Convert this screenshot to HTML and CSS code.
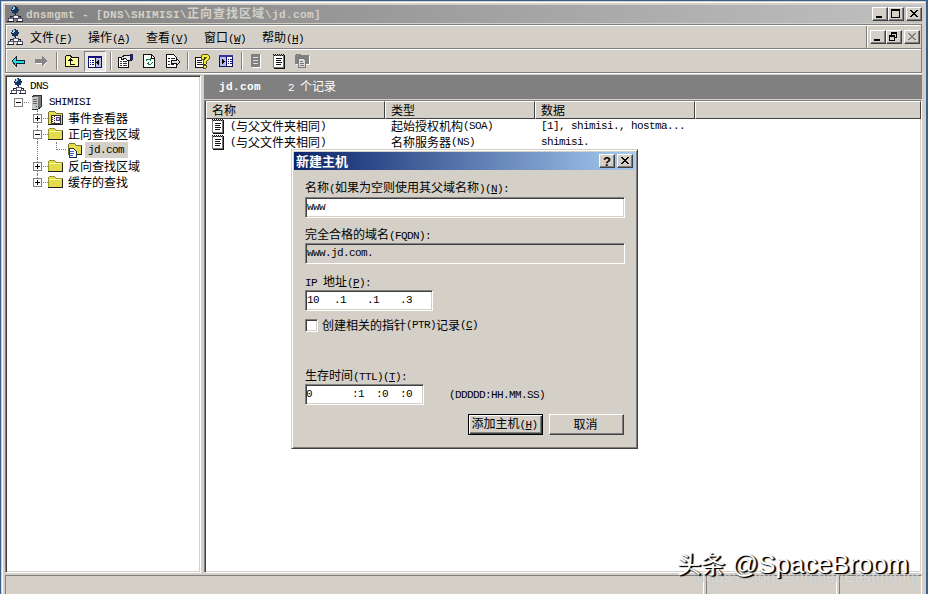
FILE: index.html
```html
<!DOCTYPE html>
<html lang="zh-CN">
<head>
    <meta charset="UTF-8">
    <title>dnsmgmt</title>
    <link rel="stylesheet" href="styles.css">
</head>
<body>
    <!-- shared icons -->
    <svg class="defs" width="0" height="0">
        <symbol id="dns" viewBox="0 0 16 16">
            <path d="M8 6v5M3 13v-3h10v3" fill="none" stroke="#223"/>
            <circle cx="8" cy="4" r="3.6" fill="#17365f"/>
            <path d="M6 1h2v2H6zM5 3h2v1H5z" fill="#9fd0ee"/>
            <path d="M6 9h5v3H6zM1 12h5v3H1zM10 12h5v3h-5z" fill="#fff" stroke="#335" stroke-width=".8"/>
            <path d="M0 15.5h7M9 15.5h7" stroke="#223"/>
        </symbol>
        <symbol id="server" viewBox="0 0 16 16">
            <path d="M3 3l3-2h6v12l-3 2H3z" fill="#777" stroke="#333"/>
            <path d="M3 3h6v12H3z" fill="#c6c6c6"/>
            <path d="M4 5.5h4M4 7.5h4M4 9.5h4" stroke="#666"/>
            <path d="M7 12h1v1H7z" fill="#080"/>
        </symbol>
        <symbol id="folder" viewBox="0 0 16 16">
            <path d="M1 13V4l2-2h4l2 2h6v9z" fill="#e3dc4c" stroke="#99962b"/>
            <path d="M2 5h12" stroke="#fffba8"/>
            <path d="M1 13.5h14.5V5" fill="none" stroke="#222"/>
        </symbol>
        <symbol id="events" viewBox="0 0 16 16">
            <path d="M1 14V3l2-2h4l2 2h6v11z" fill="#e3dc4c" stroke="#77742b"/>
            <path d="M4 5h9v8H4z" fill="#fff" stroke="#334"/>
            <path d="M5 5v8M7 6v7" stroke="#222" stroke-dasharray="1 1"/>
            <path d="M9 7h3v3H9z" fill="#d9c4ef" stroke="#647"/>
            <path d="M1 14.5h14.5V4" fill="none" stroke="#222"/>
        </symbol>
        <symbol id="zone" viewBox="0 0 16 16">
            <path d="M2 12V3l2-2h4l2 2h5v9z" fill="#e3dc4c" stroke="#77742b"/>
            <path d="M15.5 4v8.5H9" fill="none" stroke="#222"/>
            <path d="M3 6h4l3 3v6H3z" fill="#fff" stroke="#235"/>
            <path d="M4 9.5h4M4 11.5h4M4 13.5h3" stroke="#36c"/>
        </symbol>
        <symbol id="record" viewBox="0 0 16 16">
            <path d="M2.5 2.5h10v12h-10z" fill="#fff" stroke="#777"/>
            <path d="M2 1.5h11" stroke="#111" stroke-dasharray="1 1"/>
            <path d="M3 2.5h11" stroke="#111" stroke-dasharray="1 1"/>
            <path d="M3 15.5h10.5V3" fill="none" stroke="#111"/>
            <path d="M5 5.5h6M5 7.5h5M5 9.5h6M5 11.5h5" stroke="#111"/>
        </symbol>
        <symbol id="min" viewBox="0 0 12 10"><path d="M2 7h6v2H2z"/></symbol>
        <symbol id="max" viewBox="0 0 12 10"><path d="M1 0h9v9H1zM2 2v6h7V2z" fill-rule="evenodd"/></symbol>
        <symbol id="restore" viewBox="0 0 12 10"><path d="M3 0h6v6H7v3H1V3h2zM4 2v1h3v2h1V2zM2 5v3h4V5z" fill-rule="evenodd"/></symbol>
        <symbol id="close" viewBox="0 0 12 10"><path d="M2 1h2v1h1v1h2V2h1V1h2v1H9v1H8v1H7v1h1v1h1v1h1v1H8V7H7V6H5v1H4v1H2V7h1V6h1V5h1V4H4V3H3V2H2z"/></symbol>
    </svg>

    <div class="window">
        <div class="titlebar">
            <svg class="icon"><use href="#dns"/></svg>
            <div class="title"><span class="en">dnsmgmt - [DNS\SHIMISI\</span>正向查找区域<span class="en">\jd.com]</span></div>
            <div class="buttons">
                <button><svg><use href="#min"/></svg></button>
                <button><svg><use href="#max"/></svg></button>
                <button class="x"><svg><use href="#close"/></svg></button>
            </div>
        </div>

        <div class="bars">
            <div class="menubar">
                <svg class="icon"><use href="#dns"/></svg>
                <ul class="menu">
                    <li>文件<span class="en">(<u>F</u>)</span></li>
                    <li>操作<span class="en">(<u>A</u>)</span></li>
                    <li>查看<span class="en">(<u>V</u>)</span></li>
                    <li>窗口<span class="en">(<u>W</u>)</span></li>
                    <li>帮助<span class="en">(<u>H</u>)</span></li>
                </ul>
                <div class="buttons child">
                    <button><svg><use href="#min"/></svg></button>
                    <button><svg><use href="#restore"/></svg></button>
                    <button class="x off"><svg><use href="#close"/></svg></button>
                </div>
            </div>
            <div class="toolbar">
                <svg class="tool" viewBox="0 0 16 16"><path d="M2 8l4-4v3h8v3H6v3z" fill="#2dd" stroke="#123"/></svg>
                <svg class="tool t2" viewBox="0 0 16 16"><path d="M2 6h7V3l5 5-5 5v-3H2z" fill="#858585"/><path d="M14 9l-4 4M3 10.500h6" stroke="#fff"/></svg>
                <span class="sep s1"></span>
                <svg class="tool t3" viewBox="0 0 16 16"><path d="M1.500 13.500v-10l1-1h4l1 2h7v9z" fill="#ffff99" stroke="#111"/><path d="M6.500 6v5h4M4.500 8l2-2 2 2" fill="none" stroke="#111"/></svg>
                <span class="pressed">
                    <svg class="tool" viewBox="0 0 16 16"><path d="M1.500 2.500h13v11h-13z" fill="#fff" stroke="#111166"/><path d="M1 2h14v2H1z" fill="#11117a"/><path d="M8 4h6v9H8z" fill="#b9bce8"/><path d="M8.500 4v9" stroke="#117"/><path d="M3 6h1v1H3zM5 6h2v1H5zM3 8h1v1H3zM5 8h2v1H5zM3 10h1v1H3zM5 10h2v1H5z" fill="#117"/><path d="M12 6v5l-3-2.500z"/></svg>
                </span>
                <span class="sep s2"></span>
                <svg class="tool t4" viewBox="0 0 17 16"><path d="M1.500 4.500h10v10h-10z" fill="#fff" stroke="#111"/><path d="M3 8.500h2M6 8.500h4M3 10.500h2M6 10.500h4M3 12.500h2M6 12.500h4" stroke="#333"/><path d="M4 5l4-3h6v5h-4L8 5 5 7z" fill="#e9e6df" stroke="#111"/><path d="M13 1h3v6h-3z" fill="#226"/></svg>
                <svg class="tool t5" viewBox="0 0 16 16"><path d="M2.500 1.500h8l3 3v10h-11z" fill="#fff" stroke="#111"/><path d="M10 2v3h3" fill="none" stroke="#111"/><path d="M5 8V7l1-1h3l1 1M9 5v3M11 9v1l-1 1H7l-1-1M7 9v3" fill="none" stroke="#178248"/></svg>
                <svg class="tool t6" viewBox="0 0 16 16"><path d="M1.500 1.500h7l3 3v10h-10z" fill="#fff" stroke="#111"/><path d="M3 5.500h2M3 8.500h2M3 11.500h2M6 5.500h4M6 11.500h3" stroke="#222"/><path d="M6 7.500h5V5l4 4-4 4v-2.500H6z" fill="#ddd" stroke="#111"/></svg>
                <span class="sep s3"></span>
                <svg class="tool t7" viewBox="0 0 16 16"><path d="M1.500 4.500h9v10h-9z" fill="#fff" stroke="#111"/><path d="M3 7.500h5M3 9.500h5M3 11.500h6" stroke="#222"/><path d="M7 6V3l2-2h4l2 2v3l-3 3v2H9V8l3-3V4h-2v2zM9 12h3v3H9z" fill="#f5ec38" stroke="#332f00" stroke-width=".8"/></svg>
                <svg class="tool t8" viewBox="0 0 16 16"><path d="M1.500 2.500h13v11h-13z" fill="#fff" stroke="#111166"/><path d="M1 2h14v2H1z" fill="#33339a"/><path d="M2 4h6v9H2z" fill="#b9bce8"/><path d="M8.500 4v9" stroke="#117"/><path d="M10 6h1v1h-1zM12 6h2v1h-2zM10 8h1v1h-1zM12 8h2v1h-2zM10 10h1v1h-1zM12 10h2v1h-2z" fill="#117"/><path d="M4 6v5l3-2.500z"/></svg>
                <span class="sep s4"></span>
                <svg class="tool t9" viewBox="0 0 16 16"><path d="M4 2h9v13H4z" fill="#fff"/><path d="M3 1h9v13H3z" fill="#808080"/><path d="M5 4.500h5M5 7.500h5M5 10.500h5" stroke="#ddd"/></svg>
                <svg class="tool t10"><use href="#record"/></svg>
                <svg class="tool t11" viewBox="0 0 16 16"><path d="M2 12V3l1-1h4l1 1h8v9z" fill="#fff"/><path d="M1 11V2l1-1h4l1 1h8v9z" fill="#808080"/><path d="M4.500 5.500h5l2 2v7h-7z" fill="#ddd" stroke="#777"/><path d="M6 8.500h3M6 10.500h4M6 12.500h4" stroke="#777"/></svg>
            </div>
        </div>

        <div class="main">
            <ul class="tree">
                <li><svg class="icon"><use href="#dns"/></svg><span class="en">DNS</span></li>
                <li class="l1"><i class="box"></i><svg class="icon"><use href="#server"/></svg><span class="en">SHIMISI</span></li>
                <li class="l2"><i class="box plus"></i><svg class="icon"><use href="#events"/></svg>事件查看器</li>
                <li class="l2"><i class="box"></i><svg class="icon"><use href="#folder"/></svg>正向查找区域</li>
                <li class="l3"><i class="elbow"></i><svg class="icon"><use href="#zone"/></svg><span class="en selected">jd.com</span></li>
                <li class="l2"><i class="box plus"></i><svg class="icon"><use href="#folder"/></svg>反向查找区域</li>
                <li class="l2"><i class="box plus"></i><svg class="icon"><use href="#folder"/></svg>缓存的查找</li>
            </ul>

            <div class="detail">
                <div class="banner"><b class="en">jd.com</b><span><span class="en">2 </span>个记录</span></div>
                <div class="list">
                    <div class="row head"><div>名称</div><div>类型</div><div>数据</div><div></div></div>
                    <div class="row">
                        <div><svg class="icon"><use href="#record"/></svg><span class="en">(</span>与父文件夹相同<span class="en">)</span></div>
                        <div>起始授权机构<span class="en">(SOA)</span></div>
                        <div class="en">[1], shimisi., hostma...</div>
                    </div>
                    <div class="row">
                        <div><svg class="icon"><use href="#record"/></svg><span class="en">(</span>与父文件夹相同<span class="en">)</span></div>
                        <div>名称服务器<span class="en">(NS)</span></div>
                        <div class="en">shimisi.</div>
                    </div>
                </div>
            </div>
        </div>

        <div class="status"><div></div><div></div><div></div></div>
    </div>

    <div class="dialog">
        <div class="dialog-title">
            <div class="title">新建主机</div>
            <div class="buttons">
                <button class="help">?</button>
                <button class="x"><svg><use href="#close"/></svg></button>
            </div>
        </div>
        <form class="form">
            <div class="label">名称<span class="en">(</span>如果为空则使用其父域名称<span class="en">)(<u>N</u>):</span></div>
            <div class="field en">www</div>
            <div class="label fqdn">完全合格的域名<span class="en">(FQDN):</span></div>
            <div class="field readonly en">www.jd.com.</div>
            <div class="label ip-label"><span class="en">IP </span>地址<span class="en">(<u>P</u>):</span></div>
            <div class="field ip en"><span>10</span><span>.1</span><span>.1</span><span>.3</span></div>
            <div class="check"><i class="checkbox"></i>创建相关的指针<span class="en">(PTR)</span>记录<span class="en">(<u>C</u>)</span></div>
            <div class="label ttl-label">生存时间<span class="en">(TTL)(<u>T</u>):</span></div>
            <div class="ttl-row">
                <div class="field ttl en"><span>0</span><span>:1</span><span>:0</span><span>:0</span></div>
                <span class="en">(DDDDD:HH.MM.SS)</span>
            </div>
            <div class="actions">
                <button type="button" class="btn default">添加主机<span class="en">(<u>H</u>)</span></button>
                <button type="button" class="btn">取消</button>
            </div>
        </form>
    </div>

    <div class="watermark">头条 <span>@SpaceBroom</span></div>
    <div class="link">https://blog.csdn.net/Eastmount</div>
</body>
</html>
```
FILE: styles.css
```css
* {
    box-sizing: border-box;
}

body {
    margin: 0;
    width: 928px;
    height: 594px;
    overflow: hidden;
    position: relative;
    background: #3a5f8c;
    font: 12px/16px "Noto Sans CJK SC", sans-serif;
    color: #000;
}

ul {
    list-style: none;
    margin: 0;
    padding: 0;
}

svg {
    display: block;
    flex: none;
    shape-rendering: crispEdges;
}

.defs {
    position: absolute;
}

/* half-width latin text, 6px per letter */
.en {
    font-family: "Liberation Mono", monospace;
    font-size: 11px;
    letter-spacing: -0.6px;
    white-space: pre;
}

u {
    text-underline-offset: 1px;
}

.icon {
    width: 16px;
    height: 16px;
}

.window {
    margin: 1px 2px 0 1px;
    height: 600px;
    padding: 3px 3px 0 3px;
    border: 1px solid #d4d0c8;
    box-shadow: inset 1px 1px #fff;
    background: #d4d0c8;
    display: flex;
    flex-direction: column;
}

.titlebar {
    height: 18px;
    display: flex;
    align-items: center;
    padding: 0 0 0 2px;
    background: linear-gradient(to right, #808080, #c0c0c0);
    color: #d4d0c8;
    font-weight: bold;
}

.titlebar .title {
    margin-left: 3px;
    flex: 1;
    letter-spacing: 1px;
}

/* bold letters are one pixel wider */
.titlebar .en,
.banner b.en {
    letter-spacing: 0.4px;
}

.buttons {
    display: flex;
}

.buttons button {
    width: 16px;
    height: 14px;
    padding: 1px;
    border: 1px solid;
    border-color: #fff #404040 #404040 #fff;
    box-shadow: inset -1px -1px #808080;
    background: #d4d0c8;
    font: bold 13px/11px "Liberation Sans", sans-serif;
}

.buttons svg {
    width: 12px;
    height: 10px;
}

.buttons .x {
    margin-left: 2px;
}

.buttons .off {
    fill: #808080;
}

.bars {
    margin-top: 1px;
    height: 49px;
    border: 1px solid #808080;
    box-shadow: inset 1px 1px #fff, 0 1px #fff;
}

.menubar {
    height: 24px;
    display: flex;
    padding: 1px 1px 0 1px;
    border-bottom: 1px solid #808080;
}

.menubar > .icon {
    margin: 3px 0 0 0;
}

.menu {
    display: flex;
    gap: 16px;
    padding: 3px 0 0 7px;
    flex: 1;
}

.menu li {
    width: 42px;
    white-space: nowrap;
}

.child {
    padding: 4px 0 0 3px;
    border-left: 1px solid #808080;
    box-shadow: inset 1px 0 #fff;
}

.toolbar {
    height: 23px;
    display: flex;
    align-items: center;
    padding-left: 4px;
    border-top: 1px solid #fff;
}

.tool {
    width: 16px;
    height: 16px;
}

.t2 { margin-left: 7px; }
.t3 { margin: 0 4px 0 6px; }
.t4 { margin-left: 5px; width: 17px; }
.t5 { margin-left: 7px; }
.t6 { margin-left: 8px; }
.t7 { margin-left: 5px; }
.t8 { margin-left: 8px; }
.t9 { margin-left: 5px; }
.t10 { margin-left: 7px; }
.t11 { margin-left: 7px; }

.sep {
    width: 2px;
    height: 18px;
    border-left: 1px solid #808080;
    border-right: 1px solid #fff;
}

.s1 { margin-left: 7px; }
.s2 { margin-left: 4px; }
.s3 { margin-left: 6px; }
.s4 { margin-left: 7px; }

.pressed {
    width: 22px;
    height: 21px;
    padding: 2px;
    border: 1px solid;
    border-color: #808080 #fff #fff #808080;
    background: #eae8e4;
}

.main {
    margin-top: 2px;
    height: 498px;
    display: flex;
    gap: 3px;
}

.tree {
    width: 196px;
    border: 1px solid;
    border-color: #808080 #fff #fff #808080;
    box-shadow: inset 1px 1px #404040, inset -1px -1px #d4d0c8;
    background: #fff;
    padding: 2px 0 0 4px;
}

.tree li {
    height: 16px;
    display: flex;
    align-items: center;
    position: relative;
}

.tree .icon {
    margin-right: 4px;
}

.tree .l1 {
    padding-left: 4px;
}

.tree .l2 {
    padding-left: 23px;
}

.tree .l2 .icon {
    margin: 0 5px 0 -1px;
}

.tree .l3 {
    padding-left: 46px;
}

/* dotted lines that run past the expand boxes */
.tree .l2::before,
.tree .l3::before {
    content: "";
    position: absolute;
    left: 27px;
    top: 0;
    height: 16px;
    border-left: 1px dotted #808080;
}

.tree .l2:last-child::before {
    height: 8px;
}

.box {
    position: relative;
    width: 9px;
    height: 9px;
    margin-right: 6px;
    border: 1px solid #808080;
    background: linear-gradient(#000, #000) center / 5px 1px no-repeat #fff;
}

.box.plus {
    background: linear-gradient(#000, #000) center / 5px 1px no-repeat, linear-gradient(#000, #000) center / 1px 5px no-repeat #fff;
}

.box::after {
    content: "";
    position: absolute;
    left: 9px;
    top: 3px;
    width: 5px;
    border-top: 1px dotted #808080;
}

.elbow {
    width: 10px;
    height: 8px;
    margin: 0 0 8px 0;
    border: dotted #808080;
    border-width: 0 0 1px 1px;
}

.tree .l3 .icon {
    margin-right: 3px;
}

.selected {
    background: #d4d0c8;
    padding: 0 4px 0 3px;
}

.detail {
    flex: 1;
    display: flex;
    flex-direction: column;
}

.banner {
    height: 24px;
    display: flex;
    align-items: center;
    gap: 27px;
    padding-left: 15px;
    background: #808080;
    color: #fff;
}

.list {
    flex: 1;
    margin-top: 1px;
    background: #fff;
    border: 1px solid;
    border-color: #808080 #fff #fff #808080;
    box-shadow: inset 1px 0 #404040, inset -1px -1px #d4d0c8;
}

.row {
    display: grid;
    grid-template-columns: 179px 150px 160px 1fr;
    height: 16px;
    padding-left: 1px;
}

.row > div {
    display: flex;
    align-items: center;
    padding-left: 6px;
    line-height: 16px;
}

.row > div:first-child {
    padding-left: 4px;
}

.row .icon {
    margin-right: 4px;
}

.head {
    height: 17px;
}

.head > div,
.head > div:first-child {
    padding-left: 5px;
    background: #d4d0c8;
    border: 1px solid;
    border-color: #fff #404040 #404040 #fff;
}

.status {
    flex: 1;
    margin-top: 2px;
    display: grid;
    grid-template-columns: 699px 131px 1fr;
    gap: 2px;
}

.status div {
    border: 1px solid;
    border-color: #808080 #fff #fff #808080;
}

.dialog {
    position: absolute;
    left: 291px;
    top: 149px;
    width: 347px;
    height: 300px;
    padding: 2px;
    border: 1px solid;
    border-color: #d4d0c8 #404040 #404040 #d4d0c8;
    box-shadow: inset 1px 1px #fff, inset -1px -1px #808080;
    background: #d4d0c8;
}

.dialog-title {
    height: 18px;
    display: flex;
    align-items: center;
    padding: 0 2px 0 2px;
    background: linear-gradient(to right, #0a246a, #a6caf0);
    color: #fff;
    font-weight: bold;
}

.dialog-title .title {
    flex: 1;
    font-size: 13px;
}

.form {
    padding: 9px 10px 0 11px;
}

.label {
    height: 16px;
}

.field {
    width: 320px;
    height: 21px;
    margin-top: 2px;
    padding: 0 1px;
    border: 1px solid;
    border-color: #808080 #fff #fff #808080;
    box-shadow: inset 1px 1px #404040, inset -1px -1px #d4d0c8;
    background: #fff;
    line-height: 18px;
}

.readonly {
    margin-top: 1px;
    background: #d4d0c8;
}

.fqdn {
    margin-top: 8px;
}

.ip-label {
    margin-top: 9px;
}

.ip {
    width: 128px;
    margin-top: 1px;
    display: grid;
    grid-template-columns: 27px 33px 33px 1fr;
}

.check {
    margin-top: 6px;
    height: 16px;
    display: flex;
    align-items: center;
}

.checkbox {
    width: 13px;
    height: 13px;
    margin-right: 4px;
    border: 1px solid;
    border-color: #808080 #fff #fff #808080;
    box-shadow: inset 1px 1px #404040, inset -1px -1px #d4d0c8;
    background: #fff;
}

.ttl-label {
    margin-top: 34px;
}

.ttl-row {
    display: flex;
    align-items: center;
    gap: 25px;
    margin-top: 1px;
}

.ttl {
    width: 119px;
    margin: 0;
    padding-left: 0;
    display: grid;
    grid-template-columns: 46px 24px 24px 1fr;
}

.actions {
    display: flex;
    justify-content: flex-end;
    gap: 6px;
    margin: 9px 1px 0 0;
}

.btn {
    width: 75px;
    height: 21px;
    padding: 0 2px 1px 0;
    border: 1px solid;
    border-color: #fff #404040 #404040 #fff;
    box-shadow: inset -1px -1px #808080;
    background: #d4d0c8;
    font: 12px/16px "Noto Sans CJK SC", sans-serif;
    white-space: nowrap;
}

.default {
    border-color: #000;
    box-shadow: inset 1px 1px #fff, inset -1px -1px #404040, inset -2px -2px #808080;
}

.watermark {
    position: absolute;
    left: 677px;
    top: 550px;
    font: 24px/28px "Liberation Sans", "Noto Sans CJK SC", sans-serif;
    color: #fff;
    text-shadow: 1px 1px 1px #000, 2px 1px 1px #000;
    white-space: nowrap;
    z-index: 2;
}

.watermark span {
    font-size: 26px;
}

.link {
    position: absolute;
    left: 697px;
    top: 567px;
    font: 15px/20px "Liberation Sans", sans-serif;
    letter-spacing: 0.4px;
    color: rgba(255, 255, 255, 0.6);
    text-shadow: 0 0 1px rgba(120, 120, 120, 0.5);
}
```
